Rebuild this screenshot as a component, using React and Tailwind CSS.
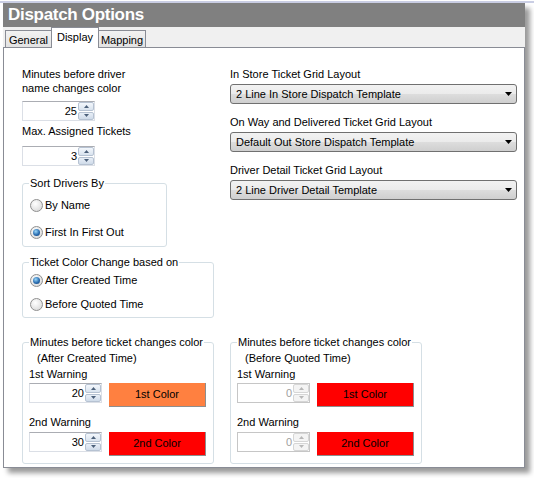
import React from "react";

function Spin({ value, disabled, width = "w-[73px]" }) {
  const arrow = disabled ? "#b8b8b8" : "#4c607a";
  return (
    <div
      className={`flex h-[20px] ${width} border ${
        disabled
          ? "border-[#c6c6c6]"
          : "border-[#dbdfe6] border-t-[#abadb3]"
      } bg-white`}
    >
      <div
        className={`flex-1 text-right pr-[1px] leading-[18px] ${
          disabled ? "text-[#a0a0a0]" : "text-black"
        }`}
      >
        {value}
      </div>
      <div className="w-[16px] flex flex-col gap-[1px] py-[0px]">
        <div
          className={`flex-1 flex items-center justify-center rounded-[2px] border ${
            disabled
              ? "border-[#d6d6d6] bg-[#f4f4f4]"
              : "border-[#b6c2d2] bg-gradient-to-b from-[#f3f7fc] to-[#d9e3ee]"
          }`}
        >
          <svg width="5" height="3" viewBox="0 0 5 3">
            <path d="M0 3h5L2.5 0z" fill={arrow} />
          </svg>
        </div>
        <div
          className={`flex-1 flex items-center justify-center rounded-[2px] border ${
            disabled
              ? "border-[#d6d6d6] bg-[#f4f4f4]"
              : "border-[#b6c2d2] bg-gradient-to-b from-[#e9eff7] to-[#cfdbe9]"
          }`}
        >
          <svg width="5" height="3" viewBox="0 0 5 3">
            <path d="M0 0h5L2.5 3z" fill={arrow} />
          </svg>
        </div>
      </div>
    </div>
  );
}

function Radio({ checked, label }) {
  return (
    <div className="flex items-center h-[14px]">
      <div className="w-[13px] h-[13px] rounded-full border border-[#8f8f8f] bg-[radial-gradient(circle_at_40%_35%,#ffffff,#d2d2d2)] flex items-center justify-center">
        {checked && (
          <div className="w-[7px] h-[7px] rounded-full bg-[radial-gradient(circle_at_40%_35%,#9bd8fa,#2a6db0_55%,#0d3a70)]" />
        )}
      </div>
      <span className="ml-[2px]">{label}</span>
    </div>
  );
}

function Select({ value }) {
  return (
    <div className="h-[20px] w-[287px] flex items-center justify-between rounded-[3px] border border-[#707070] bg-[linear-gradient(#f2f2f2,#ebebeb_50%,#dddddd_50%,#cfcfcf)] pl-[5px] pr-[4px]">
      <span>{value}</span>
      <svg width="7" height="4" viewBox="0 0 7 4">
        <path d="M0 0h7L3.5 4z" fill="#000" />
      </svg>
    </div>
  );
}

function ColorButton({ color, label }) {
  return (
    <div
      className={`w-[97px] h-[24px] ${color} border-r border-b border-[#8e8e8e] flex items-center justify-center`}
    >
      {label}
    </div>
  );
}

function WarningBox({ title, sub, disabled, v1, v2, c1 }) {
  return (
    <fieldset className="w-[192px] border border-[#d5dfe5] rounded-[3px] pl-[6px] pb-[7px]">
      <legend className="px-[1px] leading-[14px]">{title}</legend>
      <div className="pl-[8px] leading-[14px] mt-[2px]">{sub}</div>
      <div className="leading-[14px] mt-[2px]">1st Warning</div>
      <div className="flex gap-[7px] mt-[2px] items-start">
        <Spin value={v1} disabled={disabled} />
        <ColorButton color={c1} label="1st Color" />
      </div>
      <div className="leading-[14px] mt-[8px]">2nd Warning</div>
      <div className="flex gap-[7px] mt-[3px] items-start">
        <Spin value={v2} disabled={disabled} />
        <ColorButton color="bg-[#ff0000]" label="2nd Color" />
      </div>
    </fieldset>
  );
}

export default function App() {
  return (
    <div className="w-[534px] h-[478px] bg-white overflow-hidden font-['Liberation_Sans',Arial,sans-serif] text-[11px] text-black">
      <div className="h-[1px]" />
      <div className="h-[2px] bg-[#cacee4]" />
      <div className="ml-[3px] w-[522px] shadow-[5px_5px_5px_rgba(0,0,0,0.4)]">
        {/* Title */}
        <div className="h-[24px] bg-[#808080] text-white font-bold text-[17px] tracking-[-0.3px] pl-[5px] flex items-center">
          Dispatch Options
        </div>

        {/* Tabs */}
        <div className="h-[21px] bg-[#f0f0f0] border-b border-[#898c95] flex items-end pl-[2px]">
          <div className="h-[17px] w-[47px] border border-b-0 border-[#898c95] bg-gradient-to-b from-[#f2f2f2] to-[#e2e2e2] flex items-center justify-center pt-[2px]">
            General
          </div>
          <div className="relative z-10 h-[21px] w-[48px] -mb-px -ml-px bg-white border border-b-0 border-[#898c95] flex items-center justify-center pb-[1px]">
            Display
          </div>
          <div className="h-[17px] w-[48px] -ml-px border border-b-0 border-[#898c95] bg-gradient-to-b from-[#f2f2f2] to-[#e2e2e2] flex items-center justify-center pt-[2px]">
            Mapping
          </div>
        </div>

        {/* Content */}
        <div className="h-[420px] border-x border-b border-[#898c95] bg-white pt-[19px] pl-[18px]">
          <div className="flex gap-[16px]">
            {/* Left column */}
            <div className="w-[192px] flex flex-col">
              <div className="leading-[14px]">
                Minutes before driver
                <br />
                name changes color
              </div>
              <div className="mt-[6px]">
                <Spin value="25" />
              </div>
              <div className="mt-[3px] leading-[14px]">Max. Assigned Tickets</div>
              <div className="mt-[8px]">
                <Spin value="3" />
              </div>

              <fieldset className="mt-[10px] w-[145px] border border-[#d5dfe5] rounded-[3px] pl-[6px] pt-[8px] pb-[7px]">
                <legend className="px-[1px] leading-[14px]">Sort Drivers By</legend>
                <div className="pl-[1px] flex flex-col gap-[13px]">
                  <Radio label="By Name" />
                  <Radio checked label="First In First Out" />
                </div>
              </fieldset>

              <fieldset className="mt-[8px] w-[192px] border border-[#d5dfe5] rounded-[3px] pl-[6px] pt-[4px] pb-[6px]">
                <legend className="px-[1px] leading-[14px]">
                  Ticket Color Change based on
                </legend>
                <div className="pl-[1px] flex flex-col gap-[10px]">
                  <Radio checked label="After Created Time" />
                  <Radio label="Before Quoted Time" />
                </div>
              </fieldset>
            </div>

            {/* Right column */}
            <div className="w-[287px] flex flex-col">
              <div className="leading-[14px]">In Store Ticket Grid Layout</div>
              <div className="mt-[3px]">
                <Select value="2 Line In Store Dispatch Template" />
              </div>
              <div className="mt-[11px] leading-[14px]">
                On Way and Delivered Ticket Grid Layout
              </div>
              <div className="mt-[3px]">
                <Select value="Default Out Store Dispatch Template" />
              </div>
              <div className="mt-[11px] leading-[14px]">
                Driver Detail Ticket Grid Layout
              </div>
              <div className="mt-[3px]">
                <Select value="2 Line Driver Detail Template" />
              </div>
            </div>
          </div>

          {/* Warning boxes */}
          <div className="flex gap-[16px] mt-[17px]">
            <WarningBox
              title="Minutes before ticket changes color"
              sub="(After Created Time)"
              v1="20"
              v2="30"
              c1="bg-[#ff8040]"
            />
            <WarningBox
              title="Minutes before ticket changes color"
              sub="(Before Quoted Time)"
              disabled
              v1="0"
              v2="0"
              c1="bg-[#ff0000]"
            />
          </div>
        </div>
      </div>
    </div>
  );
}
